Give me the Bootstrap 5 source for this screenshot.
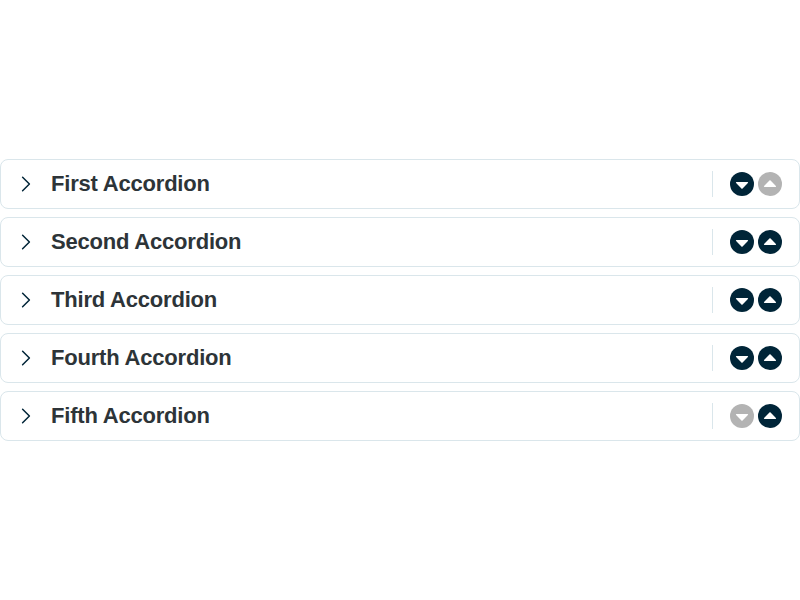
<!DOCTYPE html>
<html lang="en">
<head>
<meta charset="utf-8">
<meta name="viewport" content="width=device-width, initial-scale=1">
<title>Accordions</title>
<link href="https://cdn.jsdelivr.net/npm/bootstrap@5.3.0/dist/css/bootstrap.min.css" rel="stylesheet">
<style>
body { font-family: "Liberation Sans", Arial, sans-serif; color: #2b3438; }
.panel-row { height: 50px; border: 1px solid #dae6eb; border-radius: 8px; padding: 0 17px 0 17px; }
.panel-title { font-size: 22px; line-height: 24px; font-weight: 700; letter-spacing: -.2px; margin-left: 17px; color: #2d3438; }
.chevron { width: 16px; height: 16px; color: #002538; }
.divider { width: 1px; height: 26px; background: #dae6eb; margin-right: 17px; }
.move-btn, .move-btn:hover { width: 24px; height: 24px; background: #002538; color: #fff; }
.move-btn:disabled { background: #b3b3b3; color: #fff; }
</style>
</head>
<body>
<svg class="d-none">
  <symbol id="chevron" viewBox="0 0 16 16"><path d="M4.6 1.2 11.4 8 4.6 14.8" fill="none" stroke="currentColor" stroke-width="1.5" stroke-linecap="round" stroke-linejoin="round"/></symbol>
  <symbol id="down" viewBox="0 0 24 24"><path d="M6.5 10h11q1 .1.4 1l-5.3 5.6q-.6.5-1.2 0l-5.3-5.6q-.6-.9.4-1z" fill="currentColor"/></symbol>
  <symbol id="up" viewBox="0 0 24 24"><path d="M6.5 15h11q1-.1.4-1l-5.3-5.6q-.6-.5-1.2 0l-5.3 5.6q-.6.9.4 1z" fill="currentColor"/></symbol>
</svg>
<main class="vh-100 d-flex flex-column justify-content-center gap-2">
  <section class="panel-row d-flex align-items-center">
    <svg class="chevron"><use href="#chevron"/></svg>
    <h2 class="panel-title mb-0 me-auto">First Accordion</h2>
    <div class="divider"></div>
    <div class="d-flex gap-1">
      <button class="move-btn btn rounded-circle border-0 p-0 d-flex opacity-100" aria-label="Move down"><svg width="24" height="24"><use href="#down"/></svg></button>
      <button class="move-btn btn rounded-circle border-0 p-0 d-flex opacity-100" aria-label="Move up" disabled><svg width="24" height="24"><use href="#up"/></svg></button>
    </div>
  </section>
  <section class="panel-row d-flex align-items-center">
    <svg class="chevron"><use href="#chevron"/></svg>
    <h2 class="panel-title mb-0 me-auto">Second Accordion</h2>
    <div class="divider"></div>
    <div class="d-flex gap-1">
      <button class="move-btn btn rounded-circle border-0 p-0 d-flex" aria-label="Move down"><svg width="24" height="24"><use href="#down"/></svg></button>
      <button class="move-btn btn rounded-circle border-0 p-0 d-flex" aria-label="Move up"><svg width="24" height="24"><use href="#up"/></svg></button>
    </div>
  </section>
  <section class="panel-row d-flex align-items-center">
    <svg class="chevron"><use href="#chevron"/></svg>
    <h2 class="panel-title mb-0 me-auto">Third Accordion</h2>
    <div class="divider"></div>
    <div class="d-flex gap-1">
      <button class="move-btn btn rounded-circle border-0 p-0 d-flex" aria-label="Move down"><svg width="24" height="24"><use href="#down"/></svg></button>
      <button class="move-btn btn rounded-circle border-0 p-0 d-flex" aria-label="Move up"><svg width="24" height="24"><use href="#up"/></svg></button>
    </div>
  </section>
  <section class="panel-row d-flex align-items-center">
    <svg class="chevron"><use href="#chevron"/></svg>
    <h2 class="panel-title mb-0 me-auto">Fourth Accordion</h2>
    <div class="divider"></div>
    <div class="d-flex gap-1">
      <button class="move-btn btn rounded-circle border-0 p-0 d-flex" aria-label="Move down"><svg width="24" height="24"><use href="#down"/></svg></button>
      <button class="move-btn btn rounded-circle border-0 p-0 d-flex" aria-label="Move up"><svg width="24" height="24"><use href="#up"/></svg></button>
    </div>
  </section>
  <section class="panel-row d-flex align-items-center">
    <svg class="chevron"><use href="#chevron"/></svg>
    <h2 class="panel-title mb-0 me-auto">Fifth Accordion</h2>
    <div class="divider"></div>
    <div class="d-flex gap-1">
      <button class="move-btn btn rounded-circle border-0 p-0 d-flex opacity-100" aria-label="Move down" disabled><svg width="24" height="24"><use href="#down"/></svg></button>
      <button class="move-btn btn rounded-circle border-0 p-0 d-flex" aria-label="Move up"><svg width="24" height="24"><use href="#up"/></svg></button>
    </div>
  </section>
</main>
<script src="https://cdn.jsdelivr.net/npm/bootstrap@5.3.0/dist/js/bootstrap.bundle.min.js"></script>
</body>
</html>
